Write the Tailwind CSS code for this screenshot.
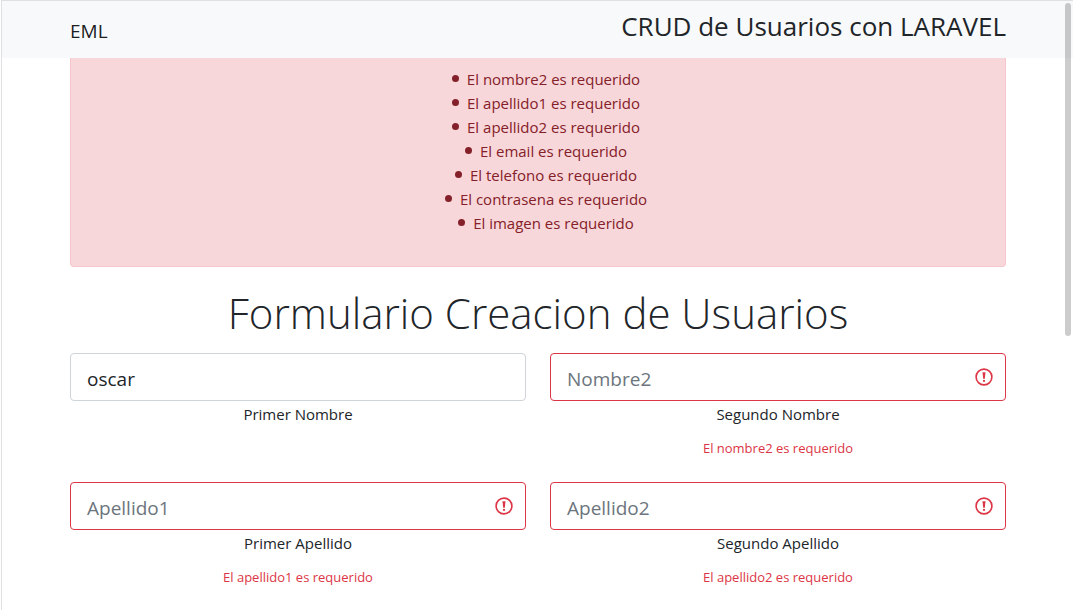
<!DOCTYPE html>
<html lang="es">
<head>
<meta charset="utf-8">
<meta name="viewport" content="width=device-width, initial-scale=1">
<title>CRUD de Usuarios con LARAVEL</title>
<script src="https://cdn.jsdelivr.net/npm/@tailwindcss/browser@4"></script>
</head>
<body class="h-screen overflow-hidden bg-white font-['Open_Sans','Noto_Sans',sans-serif] text-[15px] leading-6 text-[#212529]">
<div class="relative ml-px h-full overflow-hidden border-t border-l border-[#dee0e2]">
  <nav class="flex h-[57px] items-start justify-between bg-[#f8f9fa] pr-[67px] pl-[68px]">
    <a href="#" class="pt-4 text-[19px] leading-7 text-black/90">EML</a>
    <h3 class="pt-2 text-[26px] leading-[34px]">CRUD de Usuarios con LARAVEL</h3>
  </nav>
  <main class="pr-[67px] pl-[68px]">
    <div role="alert" class="rounded-b border-x border-b border-[#f5c6cb] bg-[#f8d7da] pt-[9px] pb-[31px] pl-4 text-center text-[#842029]">
      <ul class="*:before:mr-2 *:before:inline-block *:before:size-[7px] *:before:rounded-full *:before:bg-[#842029] *:before:align-[3px] *:before:content-['']">
        <li>El nombre2 es requerido</li>
        <li>El apellido1 es requerido</li>
        <li>El apellido2 es requerido</li>
        <li>El email es requerido</li>
        <li>El telefono es requerido</li>
        <li>El contrasena es requerido</li>
        <li>El imagen es requerido</li>
      </ul>
    </div>
    <h1 class="mt-4 mb-2.5 text-center text-[42px] leading-[60px] font-light">Formulario Creacion de Usuarios</h1>
    <form class="grid grid-cols-2 gap-x-6 text-center">
      <div class="h-[129px]">
        <input id="nombre1" type="text" value="oscar" class="block h-12 w-full rounded border border-[#ced4da] px-4 pt-1 text-[19px] outline-none">
        <label for="nombre1" class="mt-px block">Primer Nombre</label>
      </div>
      <div class="h-[129px]">
        <div class="relative">
          <input id="nombre2" type="text" placeholder="Nombre2" aria-invalid="true" aria-describedby="e-nombre2" class="block h-12 w-full rounded border border-[#dc3545] pt-1 pr-12 pl-4 text-[19px] outline-none placeholder:text-[#6c757d]">
          <svg class="absolute top-[15px] right-[13px] size-[18px]" viewBox="0 0 18 18" fill="none" stroke="#dc3545" aria-hidden="true"><circle cx="9" cy="9" r="7.9" stroke-width="1.6"/><path d="M7.5 4.2h3L9.8 10.8H8.2Z" fill="#dc3545" stroke="none"/><circle cx="9" cy="12.9" r="1.1" fill="#dc3545" stroke="none"/></svg>
        </div>
        <label for="nombre2" class="mt-px block">Segundo Nombre</label>
        <p id="e-nombre2" class="mt-3 text-[13px] leading-5 text-[#dc3545]">El nombre2 es requerido</p>
      </div>
      <div class="h-[129px]">
        <div class="relative">
          <input id="apellido1" type="text" placeholder="Apellido1" aria-invalid="true" aria-describedby="e-apellido1" class="block h-12 w-full rounded border border-[#dc3545] pt-1 pr-12 pl-4 text-[19px] outline-none placeholder:text-[#6c757d]">
          <svg class="absolute top-[15px] right-[13px] size-[18px]" viewBox="0 0 18 18" fill="none" stroke="#dc3545" aria-hidden="true"><circle cx="9" cy="9" r="7.9" stroke-width="1.6"/><path d="M7.5 4.2h3L9.8 10.8H8.2Z" fill="#dc3545" stroke="none"/><circle cx="9" cy="12.9" r="1.1" fill="#dc3545" stroke="none"/></svg>
        </div>
        <label for="apellido1" class="mt-px block">Primer Apellido</label>
        <p id="e-apellido1" class="mt-3 text-[13px] leading-5 text-[#dc3545]">El apellido1 es requerido</p>
      </div>
      <div class="h-[129px]">
        <div class="relative">
          <input id="apellido2" type="text" placeholder="Apellido2" aria-invalid="true" aria-describedby="e-apellido2" class="block h-12 w-full rounded border border-[#dc3545] pt-1 pr-12 pl-4 text-[19px] outline-none placeholder:text-[#6c757d]">
          <svg class="absolute top-[15px] right-[13px] size-[18px]" viewBox="0 0 18 18" fill="none" stroke="#dc3545" aria-hidden="true"><circle cx="9" cy="9" r="7.9" stroke-width="1.6"/><path d="M7.5 4.2h3L9.8 10.8H8.2Z" fill="#dc3545" stroke="none"/><circle cx="9" cy="12.9" r="1.1" fill="#dc3545" stroke="none"/></svg>
        </div>
        <label for="apellido2" class="mt-px block">Segundo Apellido</label>
        <p id="e-apellido2" class="mt-3 text-[13px] leading-5 text-[#dc3545]">El apellido2 es requerido</p>
      </div>
    </form>
  </main>
  <!-- overlay scrollbar thumb -->
  <div class="absolute top-0.5 right-0.5 h-[333px] w-1.5 rounded-full bg-black/20"></div>
</div>
</body>
</html>
